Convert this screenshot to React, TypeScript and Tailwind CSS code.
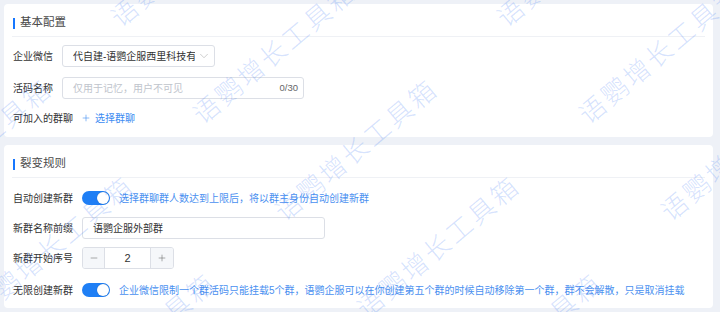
import { ChevronDown, Plus, Minus } from 'lucide-react'

const marks = (() => {
  const list: { x: number; y: number }[] = []
  for (let i = -1; i <= 2; i++) {
    for (let j = -1; j <= 4; j++) {
      const x = 122 + 386 * i + 82 * j
      const y = 30 + 97 * j
      if (x > -220 && x < 720 && y > 0 && y < 480) list.push({ x, y })
    }
  }
  return list
})()

function SectionTitle({ title }: { title: string }) {
  return (
    <div className="h-[33px] pt-[6px] border-b border-[#eff1f5] flex items-center">
      <span className="w-[2px] h-[11px] bg-[#1677ff] ml-[1px]" />
      <span className="ml-[5px] text-[11.5px] text-[#4a4a4a]">{title}</span>
    </div>
  )
}

function Toggle() {
  return (
    <div className="w-[28px] h-[14px] rounded-full bg-[#1f7ff5] flex items-center justify-end pr-[1px]">
      <span className="w-[12px] h-[12px] rounded-full bg-white shadow-[0_0_1px_rgba(0,0,0,0.3)]" />
    </div>
  )
}

function Row({ label, children, className }: { label: string; children: React.ReactNode; className: string }) {
  return (
    <div className={`flex items-center h-[22px] gap-[9px] ${className}`}>
      <span className="pl-[1px] text-[10px] text-[#333] whitespace-nowrap">{label}</span>
      {children}
    </div>
  )
}

export default function App() {
  return (
    <div className="relative w-[720px] h-[312px] overflow-hidden bg-[#eef1f7] pt-[4px] pl-[4px] flex flex-col gap-[8px] font-['Liberation_Sans','Noto_Sans_CJK_SC',sans-serif]">
      <div className="w-[709px] h-[133px] bg-white rounded-[4px] px-[8px]">
        <SectionTitle title="基本配置" />
        <Row label="企业微信" className="mt-[8px]">
          <div className="w-[153px] h-[22px] border border-[#dcdfe6] rounded-[3px] flex items-center pl-[10px] pr-[3px]">
            <span className="flex-1 overflow-hidden whitespace-nowrap text-[10px] text-[#333]">
              代自建-语鹦企服西里科技有限公司
            </span>
            <ChevronDown size={14} strokeWidth={1.1} className="ml-[2px] text-[#b4b4b4]" />
          </div>
        </Row>
        <Row label="活码名称" className="mt-[10px]">
          <div className="w-[242px] h-[22px] border border-[#dcdfe6] rounded-[3px] flex items-center pl-[10px] pr-[5px]">
            <span className="flex-1 text-[10px] text-[#c0c4cc] whitespace-nowrap">仅用于记忆，用户不可见</span>
            <span className="text-[9.5px] text-[#666]">0/30</span>
          </div>
        </Row>
        <div className="mt-[8px] flex items-center h-[22px]">
          <span className="pl-[1px] text-[10px] text-[#333]">可加入的群聊</span>
          <Plus size={10} strokeWidth={1.4} className="ml-[8px] text-[#3d8bf2]" />
          <span className="ml-[4px] text-[10px] text-[#3d8bf2]">选择群聊</span>
        </div>
      </div>

      <div className="w-[709px] h-[163px] bg-white rounded-[4px] px-[8px]">
        <SectionTitle title="裂变规则" />
        <Row label="自动创建新群" className="mt-[9px]">
          <Toggle />
          <span className="text-[10px] text-[#4a90f0] whitespace-nowrap">
            选择群聊群人数达到上限后，将以群主身份自动创建新群
          </span>
        </Row>
        <Row label="新群名称前缀" className="mt-[8px]">
          <div className="w-[243px] h-[22px] border border-[#dcdfe6] rounded-[3px] flex items-center pl-[10px]">
            <span className="text-[10px] text-[#333]">语鹦企服外部群</span>
          </div>
        </Row>
        <Row label="新群开始序号" className="mt-[8px]">
          <div className="w-[92px] h-[22px] border border-[#dcdfe6] rounded-[3px] flex items-stretch overflow-hidden">
            <span className="w-[22px] bg-[#f5f7fa] border-r border-[#dcdfe6] flex items-center justify-center text-[#666]">
              <Minus size={10} strokeWidth={1.3} />
            </span>
            <span className="flex-1 flex items-center justify-center text-[11px] text-[#333]">2</span>
            <span className="w-[23px] bg-[#f5f7fa] border-l border-[#dcdfe6] flex items-center justify-center text-[#666]">
              <Plus size={10} strokeWidth={1.3} />
            </span>
          </div>
        </Row>
        <Row label="无限创建新群" className="mt-[10px]">
          <Toggle />
          <span className="text-[10px] text-[#4a90f0] whitespace-nowrap">
            企业微信限制一个群活码只能挂载5个群，语鹦企服可以在你创建第五个群的时候自动移除第一个群，群不会解散，只是取消挂载
          </span>
        </Row>
      </div>

      <div className="absolute inset-0 pointer-events-none">
        {marks.map((m, idx) => (
          <span
            key={idx}
            className="absolute h-[26px] leading-none whitespace-nowrap text-[26px] tracking-[3px] font-light text-[rgba(45,110,245,0.2)] origin-bottom-left rotate-[-40deg] font-['Noto_Sans_CJK_SC',sans-serif]"
            style={{ left: m.x, top: m.y - 26 }}
          >
            语鹦增长工具箱
          </span>
        ))}
      </div>
    </div>
  )
}
